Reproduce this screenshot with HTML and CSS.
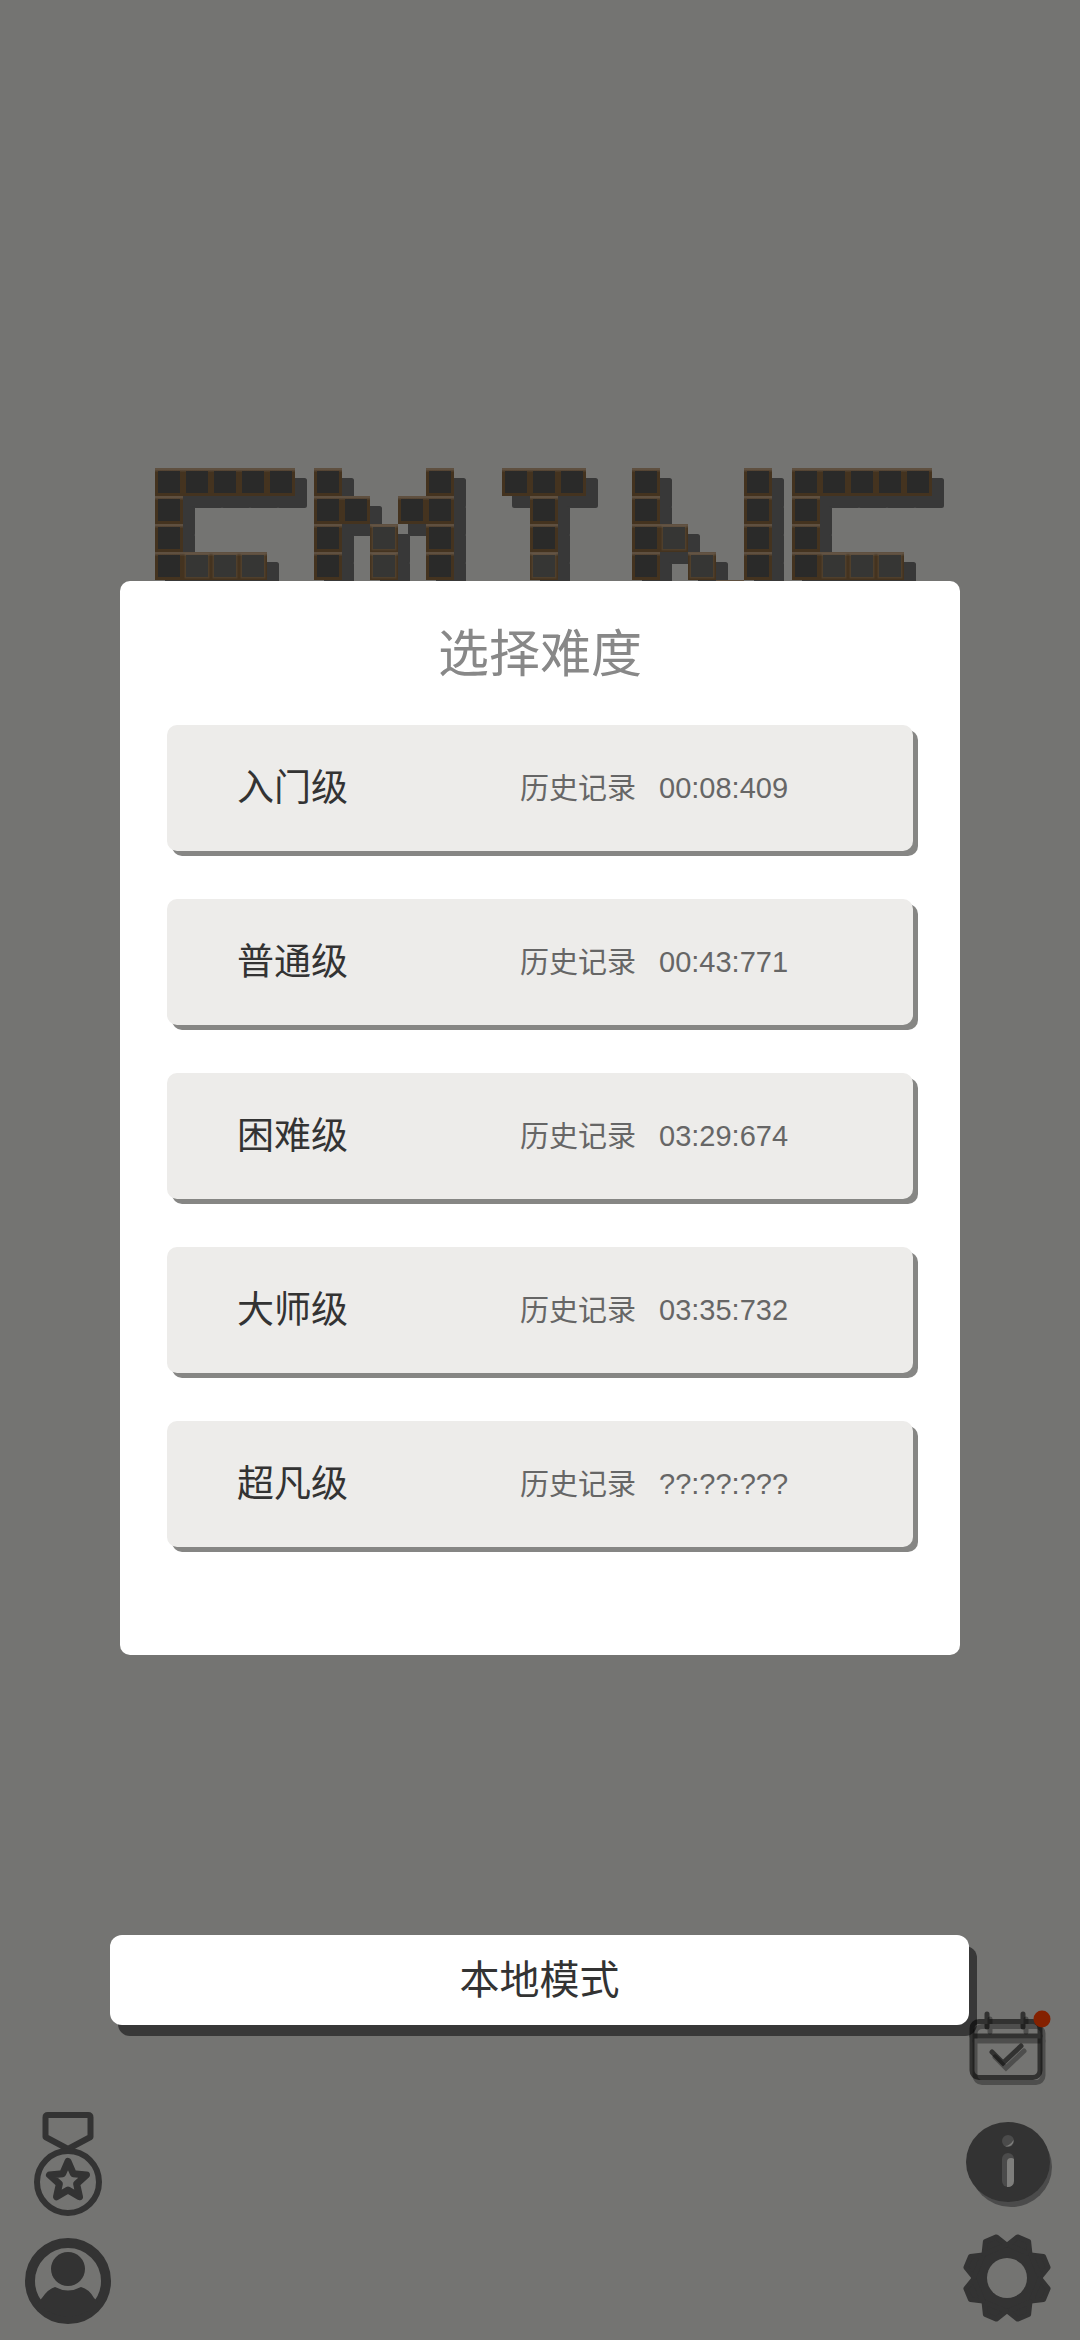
FILE: index.html
```html
<!DOCTYPE html>
<html lang="zh-CN">
<head>
  <meta charset="UTF-8" />
  <meta name="viewport" content="width=device-width, initial-scale=1.0" />
  <title>选择难度</title>
  <link rel="stylesheet" href="styles.css">
</head>
<body>

  <svg class="logo" width="800" height="113" viewBox="155 468 800 113">
    <defs>
      <linearGradient id="brickEdge" x1="0" y1="0" x2="0" y2="1">
        <stop offset="0" stop-color="#5f5040" />
        <stop offset="0.06" stop-color="#4f3f2d" />
        <stop offset="0.12" stop-color="#44331f" />
        <stop offset="1" stop-color="#44331f" />
      </linearGradient>
      <g id="cells">
        <!-- C -->
        <rect x="156.5" y="469.5" width="25" height="25" /><rect x="184.5" y="469.5" width="25" height="25" /><rect x="212.5" y="469.5" width="25" height="25" /><rect x="240.5" y="469.5" width="25" height="25" /><rect x="268.5" y="469.5" width="25" height="25" />
        <rect x="156.5" y="497.5" width="25" height="25" /><rect x="156.5" y="525.5" width="25" height="25" />
        <rect x="156.5" y="553.5" width="25" height="25" /><rect x="184.5" y="553.5" width="25" height="25" /><rect x="212.5" y="553.5" width="25" height="25" /><rect x="240.5" y="553.5" width="25" height="25" />
        <!-- M -->
        <rect x="315.5" y="469.5" width="25" height="25" /><rect x="427.5" y="469.5" width="25" height="25" />
        <rect x="315.5" y="497.5" width="25" height="25" /><rect x="343.5" y="497.5" width="25" height="25" /><rect x="399.5" y="497.5" width="25" height="25" /><rect x="427.5" y="497.5" width="25" height="25" />
        <rect x="315.5" y="525.5" width="25" height="25" /><rect x="371.5" y="525.5" width="25" height="25" /><rect x="427.5" y="525.5" width="25" height="25" />
        <rect x="315.5" y="553.5" width="25" height="25" /><rect x="371.5" y="553.5" width="25" height="25" /><rect x="427.5" y="553.5" width="25" height="25" />
        <!-- I -->
        <rect x="503.5" y="469.5" width="25" height="25" /><rect x="531.5" y="469.5" width="25" height="25" /><rect x="559.5" y="469.5" width="25" height="25" />
        <rect x="531.5" y="497.5" width="25" height="25" /><rect x="531.5" y="525.5" width="25" height="25" /><rect x="531.5" y="553.5" width="25" height="25" />
        <!-- N -->
        <rect x="633.5" y="469.5" width="25" height="25" /><rect x="745.5" y="469.5" width="25" height="25" />
        <rect x="633.5" y="497.5" width="25" height="25" /><rect x="745.5" y="497.5" width="25" height="25" />
        <rect x="633.5" y="525.5" width="25" height="25" /><rect x="661.5" y="525.5" width="25" height="25" /><rect x="745.5" y="525.5" width="25" height="25" />
        <rect x="633.5" y="553.5" width="25" height="25" /><rect x="689.5" y="553.5" width="25" height="25" /><rect x="745.5" y="553.5" width="25" height="25" />
        <rect x="717.5" y="581.5" width="25" height="25" />
        <!-- E -->
        <rect x="793.5" y="469.5" width="25" height="25" /><rect x="821.5" y="469.5" width="25" height="25" /><rect x="849.5" y="469.5" width="25" height="25" /><rect x="877.5" y="469.5" width="25" height="25" /><rect x="905.5" y="469.5" width="25" height="25" />
        <rect x="793.5" y="497.5" width="25" height="25" /><rect x="793.5" y="525.5" width="25" height="25" />
        <rect x="793.5" y="553.5" width="25" height="25" /><rect x="821.5" y="553.5" width="25" height="25" /><rect x="849.5" y="553.5" width="25" height="25" /><rect x="877.5" y="553.5" width="25" height="25" />
      </g>
    </defs>
    <use href="#cells" x="11" y="11" class="logo-shadow" />
    <use href="#cells" class="logo-brick" />
    <g class="logo-pale">
      <rect x="184.5" y="553.5" width="25" height="25" /><rect x="212.5" y="553.5" width="25" height="25" /><rect x="240.5" y="553.5" width="25" height="25" />
      <rect x="371.5" y="525.5" width="25" height="25" /><rect x="371.5" y="553.5" width="25" height="25" />
      <rect x="531.5" y="553.5" width="25" height="25" />
      <rect x="661.5" y="525.5" width="25" height="25" /><rect x="689.5" y="553.5" width="25" height="25" />
      <rect x="821.5" y="553.5" width="25" height="25" /><rect x="849.5" y="553.5" width="25" height="25" /><rect x="877.5" y="553.5" width="25" height="25" />
    </g>
  </svg>

  <div class="panel">
    <h2 class="panel-title">选择难度</h2>
    <div class="level-list">
      <div class="level">
        <span class="level-name">入门级</span>
        <span class="level-record">历史记录</span>
        <span class="level-time">00:08:409</span>
      </div>
      <div class="level">
        <span class="level-name">普通级</span>
        <span class="level-record">历史记录</span>
        <span class="level-time">00:43:771</span>
      </div>
      <div class="level">
        <span class="level-name">困难级</span>
        <span class="level-record">历史记录</span>
        <span class="level-time">03:29:674</span>
      </div>
      <div class="level">
        <span class="level-name">大师级</span>
        <span class="level-record">历史记录</span>
        <span class="level-time">03:35:732</span>
      </div>
      <div class="level">
        <span class="level-name">超凡级</span>
        <span class="level-record">历史记录</span>
        <span class="level-time">??:??:???</span>
      </div>
    </div>
  </div>

  <button class="btn-local">本地模式</button>

  <div class="tools">
    <div class="tools-left">
      <svg class="icon-medal" width="90" height="120" viewBox="0 0 90 120">
        <path d="M25 7H65Q67.500 7 67.500 9.500V29L45 41 22.500 29V9.500Q22.500 7 25 7Z" />
        <circle cx="45" cy="74" r="31" />
        <path class="medal-star" d="M45 53.500L50.300 65.700 63.500 67 53.600 75.800 56.500 88.800 45 82 33.500 88.800 36.400 75.800 26.500 67 39.700 65.700Z" />
      </svg>
      <svg class="icon-user" width="90" height="90" viewBox="0 0 90 90">
        <circle class="user-ring" cx="45" cy="45" r="38" />
        <circle cx="45" cy="33" r="17" />
        <path d="M19 62Q25 53 32 51Q45 58 58 51Q66 53 71 62L75 66A38 38 0 0 1 15 66Z" />
      </svg>
    </div>
    <div class="tools-right">
      <svg class="icon-calendar" width="100" height="80" viewBox="0 0 100 80">
        <g class="cal-lines cal-shadow">
          <rect x="12" y="16.500" width="68" height="56" rx="7" />
          <path d="M12 31H80M27 9V22M63 9V22M32 47L43 58 61 41" />
        </g>
        <g class="cal-lines cal-main">
          <rect x="12" y="16.500" width="68" height="56" rx="7" />
          <path d="M12 31H80M27 9V22M63 9V22M32 47L43 58 61 41" />
        </g>
        <circle class="cal-dot" cx="82" cy="14" r="8.500" />
      </svg>
      <svg class="icon-info" width="100" height="100" viewBox="0 0 100 100">
        <ellipse class="info-shadow" cx="51" cy="55" rx="41" ry="40" />
        <ellipse class="info-face" cx="48" cy="50" rx="42" ry="40" />
        <circle class="info-shadow" cx="48" cy="29" r="6" />
        <rect class="info-shadow" x="42" y="41" width="12" height="34" rx="6" />
        <path class="info-hole" d="M53.500 28A6 6 0 0 1 45 34C48 34 51 32 53.500 28Z" />
        <path class="info-hole" d="M54 47V69A6 6 0 0 1 47 75V50Q47 46 51 46Q53 46 54 47Z" />
      </svg>
      <svg class="icon-gear" width="100" height="100" viewBox="0 0 100 100">
        <defs>
          <path id="gearTooth" d="M35 19L41 8H53L59 19Z" />
        </defs>
        <circle class="gear-body" cx="47" cy="50" r="34" />
        <g class="gear-teeth">
          <use href="#gearTooth" transform="rotate(22.500 47 50)" />
          <use href="#gearTooth" transform="rotate(67.500 47 50)" />
          <use href="#gearTooth" transform="rotate(112.500 47 50)" />
          <use href="#gearTooth" transform="rotate(157.500 47 50)" />
          <use href="#gearTooth" transform="rotate(202.500 47 50)" />
          <use href="#gearTooth" transform="rotate(247.500 47 50)" />
          <use href="#gearTooth" transform="rotate(292.500 47 50)" />
          <use href="#gearTooth" transform="rotate(337.500 47 50)" />
        </g>
        <circle class="gear-hole" cx="47" cy="50" r="20" />
      </svg>
    </div>
  </div>

</body>
</html>
```

FILE: styles.css
```css
body {
  margin: 0;
  height: 2340px;
  padding-top: 468px;
  box-sizing: border-box;
  background-color: #747472;
  font-family: 'Liberation Sans', 'Noto Sans CJK SC', sans-serif;
}

svg {
  display: block;
}

.logo {
  margin-left: 155px;
}

.logo-shadow {
  fill: #383838;
  stroke: #383838;
  stroke-width: 5;
  stroke-linejoin: round;
}

.logo-brick {
  fill: #2a2a29;
  stroke: url(#brickEdge);
  stroke-width: 3;
}

.logo-pale {
  fill: rgba(255, 255, 235, 0.06);
}

.panel {
  width: 840px;
  height: 1074px;
  margin-left: 120px;
  background-color: #ffffff;
  border-radius: 10px;
  box-sizing: border-box;
  padding: 0 47px;
}

.panel-title {
  height: 144px;
  box-sizing: border-box;
  padding-bottom: 6px;
  margin: 0;
  display: flex;
  align-items: center;
  justify-content: center;
  font-size: 51px;
  font-weight: normal;
  color: #888888;
}

.level-list {
  display: flex;
  flex-direction: column;
  gap: 48px;
}

.level {
  height: 126px;
  display: flex;
  align-items: center;
  padding-left: 70px;
  background-color: #edecea;
  border-radius: 10px;
  box-shadow: 5px 5px 0 #868684;
}

.level-name {
  width: 283px;
  font-size: 37px;
  color: #333333;
  margin-top: -6px;
}

.level-record {
  font-size: 29px;
  color: #666666;
  margin-top: -4px;
}

.level-time {
  margin-left: 23px;
  font-size: 29px;
  color: #666666;
}

.btn-local {
  display: block;
  width: 859px;
  height: 90px;
  margin: 280px 0 0 110px;
  padding: 0 0 6px;
  border: none;
  border-radius: 12px;
  background-color: #ffffff;
  box-shadow: 8px 11px 0 #383838;
  font-family: inherit;
  font-size: 40px;
  color: #333333;
}

.tools {
  margin-top: -20px;
  display: flex;
  justify-content: space-between;
  align-items: flex-start;
  position: relative;
}

.tools-left {
  display: flex;
  flex-direction: column;
  gap: 8px;
  margin: 103px 0 0 23px;
}

.tools-right {
  display: flex;
  flex-direction: column;
  margin-right: 20px;
}

.icon-medal {
  fill: none;
  stroke: #333333;
  stroke-width: 6;
  stroke-linejoin: round;
}

.medal-star {
  stroke-width: 7;
}

.icon-user {
  fill: #333333;
}

.user-ring {
  fill: none;
  stroke: #333333;
  stroke-width: 10;
}

.cal-lines {
  fill: none;
  stroke: #000000;
  stroke-width: 5;
  stroke-linecap: round;
}

.cal-main {
  opacity: 0.56;
}

.cal-shadow {
  opacity: 0.32;
  transform: translate(3px, 5px);
}

.cal-dot {
  fill: #842100;
}

.icon-info {
  margin-top: 27px;
}

.info-shadow {
  fill: #4b4b4b;
}

.info-face {
  fill: #333333;
}

.info-hole {
  fill: #7e7e7c;
}

.icon-gear {
  margin-top: 16px;
}

.gear-body {
  fill: #333333;
}

.gear-teeth {
  fill: #333333;
  stroke: #333333;
  stroke-width: 5;
  stroke-linejoin: round;
}

.gear-hole {
  fill: #747472;
}
```
